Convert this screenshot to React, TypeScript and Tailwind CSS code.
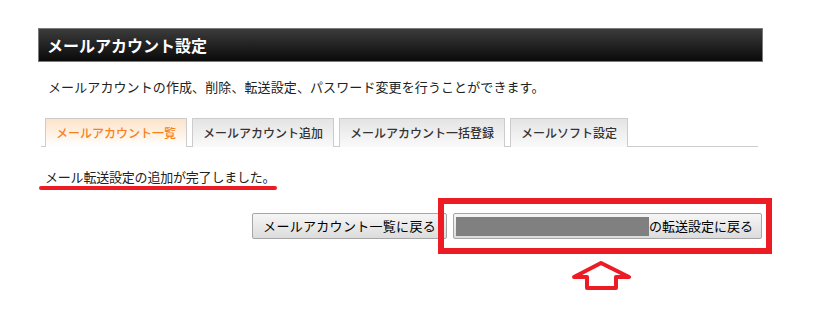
import React from "react";

const tabs = [
  { label: "メールアカウント一覧", active: true },
  { label: "メールアカウント追加", active: false },
  { label: "メールアカウント一括登録", active: false },
  { label: "メールソフト設定", active: false },
];

export default function App() {
  return (
    <div className="relative w-[824px] h-[311px] bg-white font-['Noto_Sans_CJK_JP',sans-serif] text-[#222]">
      <div className="ml-[38px] pt-[28px] w-[725px]">
        <div className="h-[34px] border border-[#7a7a7a] bg-gradient-to-b from-[#3c3c3c] to-[#0b0b0b] flex items-center pl-[8px]">
          <h1 className="text-white font-bold text-[16px] leading-none">メールアカウント設定</h1>
        </div>

        <p className="mt-[16px] pl-[10px] text-[13px] leading-[18px] tracking-[0.1px]">
          メールアカウントの作成、削除、転送設定、パスワード変更を行うことができます。
        </p>

        <div className="mt-[22px] ml-[3px] w-[717px] border-b border-[#cccccc] flex gap-[5px] pl-[4px]">
          {tabs.map((tab) => (
            <div
              key={tab.label}
              className={`h-[29px] -mb-px flex items-center px-[10px] border border-b-0 border-[#cccccc] text-[12px] font-medium ${
                tab.active
                  ? "bg-gradient-to-b from-[#fde3c8] to-white text-[#f7821b] border-b border-b-white"
                  : "bg-gradient-to-b from-[#e4e4e4] to-[#fafafa] text-[#333]"
              }`}
            >
              {tab.label}
            </div>
          ))}
        </div>

        <p className="mt-[21px] pl-[7px] text-[13px] leading-[18px] tracking-[-0.2px]">
          メール転送設定の追加が完了しました。
        </p>
        <div className="ml-[1px] w-[238px] h-[4px] rounded-full bg-[#ed1c24]" />

        <div className="mt-[23px] flex justify-end gap-[6px] pr-[1px]">
          <button className="h-[26px] px-[10px] rounded-[2px] border border-[#a6a6a6] bg-gradient-to-b from-[#f6f6f6] to-[#dcdcdc] text-[13px] tracking-[0.3px] text-black">
            メールアカウント一覧に戻る
          </button>
          <button className="h-[26px] pl-[2px] pr-[8px] rounded-[2px] border border-[#a6a6a6] bg-gradient-to-b from-[#f6f6f6] to-[#dcdcdc] text-[13px] text-black flex items-center">
            <span className="block w-[193px] h-[19px] bg-[#808080]" />
            <span>の転送設定に戻る</span>
          </button>
        </div>
      </div>

      {/* annotation overlays */}
      <div className="absolute left-[438px] top-[198px] w-[334px] h-[56px] border-[6px] border-[#ed1c24]" />
      <svg className="absolute left-[572px] top-[261px]" width="60" height="30" viewBox="0 0 60 30">
        <polygon
          points="29,2 57,16 44,16 44,27 15,27 15,16 2,16"
          fill="white"
          stroke="#ed1c24"
          strokeWidth="4"
          strokeLinejoin="round"
        />
      </svg>
    </div>
  );
}
